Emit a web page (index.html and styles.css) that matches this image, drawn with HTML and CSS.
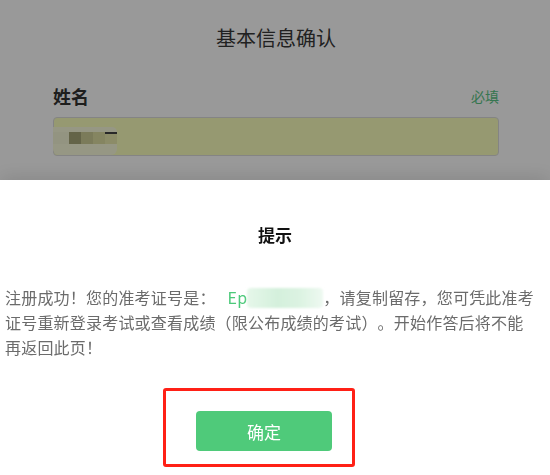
FILE: index.html
```html
<!DOCTYPE html>
<html lang="zh-CN">

<head>
    <meta charset="UTF-8">
    <title>基本信息确认</title>
    <link rel="stylesheet" href="styles.css">
</head>

<body>
    <div class="page">
        <h1 class="page-title">基本信息确认</h1>
        <div class="field">
            <div class="field-head">
                <span class="field-label">姓名</span>
                <span class="field-must">必填</span>
            </div>
            <div class="field-input">
                <!-- 打码 -->
                <div class="mosaic">
                    <div class="mosaic-row light"></div>
                    <div class="mosaic-row">
                        <i class="c0"></i><i class="c1"></i><i class="c2"></i><i class="c3"></i><i class="c4"></i>
                    </div>
                    <div class="mosaic-row light"></div>
                </div>
            </div>
        </div>
        <div class="field">
            <div class="field-head">
                <span class="field-label">性别</span>
                <span class="field-must">必填</span>
            </div>
            <div class="field-input"></div>
        </div>
    </div>

    <div class="mask"></div>

    <div class="dialog">
        <h2 class="dialog-title">提示</h2>
        <p class="dialog-text">注册成功！您的准考证号是：<span class="ticket">Ep<span class="ticket-blur"></span></span>，请复制留存，您可凭此准考证号重新登录考试或查看成绩（限公布成绩的考试）。开始作答后将不能<br>再返回此页！</p>
        <div class="mark">
            <button class="btn-ok">确定</button>
        </div>
    </div>
</body>

</html>
```

FILE: styles.css
```css
* {
    margin: 0;
    padding: 0;
    box-sizing: border-box;
    font-style: normal;
}

body {
    font-family: "Noto Sans CJK SC", "Noto Sans", sans-serif;
    background: #fff;
    color: #333;
}

.page {
    padding: 0 51px 0 53px;
}

.page-title {
    padding-top: 23px;
    font-size: 20px;
    line-height: 30px;
    font-weight: normal;
    text-align: center;
    color: #383838;
}

.field {
    margin-top: 21px;
}

.page-title + .field {
    margin-top: 31px;
}

.field-head {
    display: flex;
    justify-content: space-between;
    align-items: flex-start;
    line-height: 24px;
}

.field-label {
    font-size: 18px;
    font-weight: bold;
    color: #333;
}

.field-must {
    font-size: 14px;
    color: #5ac585;
}

.field-input {
    margin-top: 9px;
    height: 39px;
    border: 1px solid #ddd;
    border-radius: 4px;
    background: #faffbd;
}

.mosaic {
    width: 64px;
    margin: 9px 0 0 -1px;
    filter: blur(0.6px);
}

.mosaic-row {
    display: flex;
    height: 12px;
}

.mosaic-row.light {
    height: 5px;
    background: #fbfcdc;
    border-radius: 0 12px 0 0;
}

.mosaic-row.light:last-child {
    height: 11px;
    border-radius: 0 0 6px 6px;
}

.mosaic-row i {
    width: 12px;
    height: 12px;
}

.mosaic-row .c0 {
    width: 16px;
    background: #f6f7d8;
}

.mosaic-row .c1 {
    background: #a7a778;
}

.mosaic-row .c2 {
    background: #cdcd96;
}

.mosaic-row .c3 {
    background: #dedea2;
}

.mosaic-row .c4 {
    background: #e9e9ad;
    border-top: 2px solid #444;
}

.mask {
    position: fixed;
    top: 0;
    left: 0;
    right: 0;
    bottom: 0;
    background: rgba(0, 0, 0, 0.4);
}

.dialog {
    position: fixed;
    top: 180px;
    left: 0;
    right: 0;
    bottom: 0;
    padding: 43px 5px 0;
    background: #fff;
    box-shadow: 0 -3px 18px rgba(0, 0, 0, 0.12);
}

.dialog-title {
    font-size: 17px;
    line-height: 24px;
    font-weight: bold;
    text-align: center;
    color: #111;
}

.dialog-text {
    margin-top: 38px;
    font-size: 16px;
    line-height: 25px;
    letter-spacing: 0.2px;
    color: #6b6b6b;
    font-variant-east-asian: full-width;
    text-spacing-trim: space-all;
}

.ticket {
    margin-left: 12px;
    color: #4cc97a;
    font-variant-east-asian: normal;
}

.ticket-blur {
    display: inline-block;
    width: 76px;
    height: 20px;
    vertical-align: -4px;
    border-radius: 4px;
    background: linear-gradient(90deg, #e6f7ea 0%, #d4f0dc 40%, #dcf3e2 70%, #eef9f1 100%);
    filter: blur(1px);
}

.mark {
    width: 192px;
    height: 79px;
    margin: 28px 0 0 158px;
    padding: 20px 0 0 30px;
    border: 3px solid #ff2016;
    border-radius: 3px;
}

.btn-ok {
    width: 136px;
    height: 40px;
    border: 0;
    border-radius: 4px;
    background: #4fca7a;
    color: #fff;
    font-family: "Noto Sans CJK SC", "Noto Sans", sans-serif;
    font-size: 17px;
    cursor: pointer;
}
```
